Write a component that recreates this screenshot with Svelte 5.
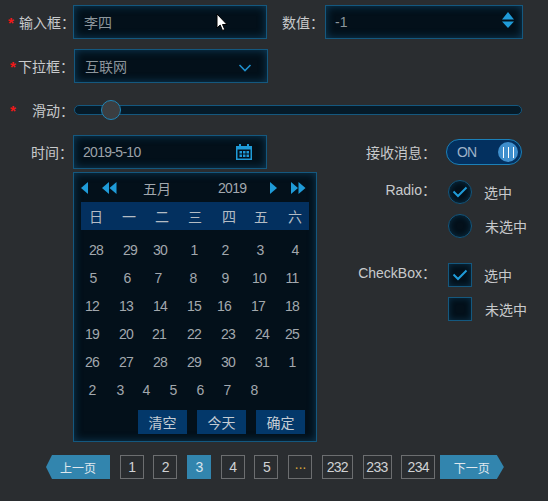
<script>
  // text centres in px from the left of the list, they are not evenly spaced
  const weekDays = [["日", 15], ["一", 48], ["二", 81], ["三", 114], ["四", 148], ["五", 180], ["六", 214]];

  const dayRows = [
    [["28", 15], ["29", 49], ["30", 79], ["1", 113], ["2", 144], ["3", 179], ["4", 214]],
    [["5", 12], ["6", 46], ["7", 77], ["8", 112], ["9", 144], ["10", 178], ["11", 211]],
    [["12", 11], ["13", 45], ["14", 79], ["15", 113], ["16", 143], ["17", 177], ["18", 211]],
    [["19", 11], ["20", 45], ["21", 78], ["22", 113], ["23", 147], ["24", 181], ["25", 211]],
    [["26", 11], ["27", 45], ["28", 79], ["29", 113], ["30", 147], ["31", 181], ["1", 211]],
    [["2", 11], ["3", 39], ["4", 65], ["5", 92], ["6", 119], ["7", 146], ["8", 173]],
  ];

  const pages = [
    { label: "1", width: 24 },
    { label: "2", width: 24 },
    { label: "3", width: 24, active: true },
    { label: "4", width: 24 },
    { label: "5", width: 24 },
    { label: "···", width: 24, dots: true },
    { label: "232", width: 31 },
    { label: "233", width: 29 },
    { label: "234", width: 34 },
  ];
</script>

<div class="page">
  <div class="row first">
    <span class="label"><i class="star">*</i>输入框：</span>
    <div class="field">李四</div>
    <span class="label num-label">数值：</span>
    <div class="field num">
      -1
      <svg class="spin" width="14" height="16" viewBox="0 0 14 16">
        <path d="M7 0 13 7.5H1Z M1 9.5H13L7 16Z" fill="#1f9bd8" />
      </svg>
    </div>
  </div>

  <div class="row second">
    <span class="label"><i class="star">*</i>下拉框：</span>
    <div class="field select">
      互联网
      <svg class="chevron" width="14" height="8" viewBox="0 0 14 8">
        <path d="M1.5 1 7 6.5 12.5 1" fill="none" stroke="#1f8fcc" stroke-width="1.6" />
      </svg>
    </div>
  </div>

  <div class="row slide">
    <span class="label"><i class="star">*</i>滑动：</span>
    <div class="track"><span class="thumb"></span></div>
  </div>

  <div class="columns">
    <div class="left">
      <div class="row">
        <span class="label">时间：</span>
        <div class="field date">
          <span class="digits">2019-5-10</span>
          <svg width="16" height="16" viewBox="0 0 16 16">
            <path d="M0 2H3V0H5V2H11V0H13V2H16V16H0Z M1.5 5.5V14.5H14.5V5.5Z" fill="#1f9bd8" fill-rule="evenodd" />
            <path d="M3.5 7H6V9.5H3.5Z M7 7H9.5V9.5H7Z M10.5 7H13V9.5H10.5Z M3.5 10.5H6V13H3.5Z M7 10.5H9.5V13H7Z M10.5 10.5H13V13H10.5Z" fill="#1f9bd8" />
          </svg>
        </div>
      </div>

      <div class="calendar">
        <div class="cal-head">
          <svg class="nav" width="8" height="12" viewBox="0 0 8 12"><path d="M7 0V12L0 6Z" /></svg>
          <svg class="nav dbl-l" width="15" height="12" viewBox="0 0 15 12"><path d="M7 0V12L0 6Z M14.5 0V12L7.5 6Z" /></svg>
          <span class="month">五月</span>
          <span class="year digits">2019</span>
          <svg class="nav next" width="8" height="12" viewBox="0 0 8 12"><path d="M0 0V12L7 6Z" /></svg>
          <svg class="nav dbl-r" width="15" height="12" viewBox="0 0 15 12"><path d="M0 0V12L7 6Z M7.5 0V12L14.5 6Z" /></svg>
        </div>
        <div class="week day-row">
          {#each weekDays as [d, x], i}
            <span class="day" style="margin-left: {i === 0 ? x : x - weekDays[i - 1][1]}px">{d}</span>
          {/each}
        </div>
        <div class="days digits">
          {#each dayRows as row}
            <div class="day-row">
              {#each row as [d, x], i}
                <span class="day" style="margin-left: {i === 0 ? x : x - row[i - 1][1]}px">{d}</span>
              {/each}
            </div>
          {/each}
        </div>
        <div class="cal-foot">
          <button>清空</button>
          <button>今天</button>
          <button>确定</button>
        </div>
      </div>
    </div>

    <div class="right">
      <div class="opt-row toggle-row">
        <span class="opt-label">接收消息：</span>
        <div class="toggle">
          <span class="on">ON</span>
          <span class="knob"><b></b><b></b><b></b></span>
        </div>
      </div>

      <div class="group radio-group">
        <span class="opt-label">Radio：</span>
        <div class="opts">
          <div class="opt">
            <span class="box round">
              <svg width="16" height="12" viewBox="0 0 16 12"><path d="M1.5 5.5 6 10 14.5 1.5" fill="none" stroke="#1f9bd8" stroke-width="2" /></svg>
            </span>
            选中
          </div>
          <div class="opt off">
            <span class="box round"></span>
            未选中
          </div>
        </div>
      </div>

      <div class="group check-group">
        <span class="opt-label">CheckBox：</span>
        <div class="opts">
          <div class="opt">
            <span class="box">
              <svg width="16" height="12" viewBox="0 0 16 12"><path d="M1.5 5.5 6 10 14.5 1.5" fill="none" stroke="#1f9bd8" stroke-width="2" /></svg>
            </span>
            选中
          </div>
          <div class="opt off">
            <span class="box"></span>
            未选中
          </div>
        </div>
      </div>
    </div>
  </div>

  <div class="pager">
    <button class="turn prev">上一页</button>
    {#each pages as p}
      <button class="pg digits" class:active={p.active} class:dots={p.dots} style="width: {p.width}px">{p.label}</button>
    {/each}
    <button class="turn next-page">下一页</button>
  </div>

  <svg class="cursor" width="12" height="19" viewBox="0 0 12 19">
    <path d="M1 1V15L4.2 12 6.5 17.5 8.8 16.5 6.5 11.5H11Z" fill="#fff" stroke="#000" stroke-width="1" />
  </svg>
</div>

<style>
  :global(body) {
    background: #2a2d30;
  }
  .page {
    position: relative;
    width: 548px;
    height: 501px;
    padding-top: 5px;
    box-sizing: border-box;
    overflow: hidden;
    background: #2a2d30;
    color: #c8cacc;
    font: 14px "Liberation Sans", "Noto Sans CJK SC", sans-serif;
  }
  .digits {
    letter-spacing: -0.7px;
  }
  .row {
    display: flex;
    align-items: center;
    height: 34px;
  }
  .second,
  .slide {
    margin-top: 10px;
  }
  .label {
    width: 73px;
    flex: none;
    box-sizing: border-box;
    position: relative;
    text-align: right;
  }
  .first .label:first-child {
    width: 75px;
    margin-right: -2px;
  }
  .second .label,
  .slide .label {
    width: 74px;
    margin-right: -1px;
  }
  .star {
    position: absolute;
    left: 8px;
    top: 2px;
    color: #f01818;
    font-style: normal;
    font-size: 15px;
    font-weight: bold;
  }
  .second .star,
  .slide .star {
    left: 10px;
  }
  .field {
    width: 194px;
    height: 34px;
    box-sizing: border-box;
    display: flex;
    align-items: center;
    justify-content: space-between;
    padding: 0 14px 0 10px;
    background: #03101a;
    border: 1px solid #14587f;
    box-shadow: inset 0 0 8px rgba(24, 100, 145, 0.55);
    color: #8c969c;
  }
  .first .num-label {
    width: 57px;
    margin-right: 1px;
  }
  .num {
    width: 198px;
    padding: 0 7px 0 9px;
  }
  .spin {
    margin-top: -4px;
  }
  .select {
    margin-left: 1px;
    padding-right: 15px;
  }
  .chevron {
    margin-top: 3px;
  }
  .date {
    padding: 0 14px 0 9px;
    color: #9ca2a8;
  }
  .track {
    position: relative;
    width: 448px;
    height: 10px;
    margin-left: 1px;
    box-sizing: border-box;
    background: #051a28;
    border: 1px solid #14587f;
    border-radius: 5px;
  }
  .thumb {
    position: absolute;
    left: 26px;
    top: -6px;
    width: 20px;
    height: 20px;
    box-sizing: border-box;
    border-radius: 50%;
    background: #3b3e41;
    border: 1.5px solid #1f86b8;
  }

  .columns {
    display: flex;
    margin-top: 8px;
  }
  .left {
    width: 317px;
    flex: none;
  }
  .calendar {
    width: 244px;
    height: 270px;
    margin: 3px 0 0 73px;
    box-sizing: border-box;
    padding: 0 7px;
    background: #03101a;
    border: 1px solid #14587f;
    box-shadow: inset 0 0 8px rgba(24, 100, 145, 0.5);
    color: #a2a8ae;
  }
  .cal-head {
    display: flex;
    align-items: center;
    height: 29px;
  }
  .nav {
    flex: none;
    fill: #1f9bd8;
  }
  .dbl-l {
    margin-left: 13px;
  }
  .month {
    width: 28px;
    margin-left: 26px;
  }
  .year {
    margin-left: 47px;
  }
  .next {
    margin-left: 24px;
  }
  .dbl-r {
    margin-left: 13px;
  }
  .days {
    margin-top: 6px;
  }
  .day-row {
    display: flex;
    height: 28px;
    align-items: center;
  }
  .day {
    width: 0;
    display: flex;
    justify-content: center;
    white-space: nowrap;
  }
  .week {
    background: #03305f;
    color: #b4bcc4;
  }
  .cal-foot {
    display: flex;
    justify-content: flex-end;
    gap: 10px;
    margin-top: 6px;
    padding-right: 4px;
  }
  button {
    padding: 0;
    border: 0;
    font: inherit;
    color: inherit;
  }
  .cal-foot button {
    width: 49px;
    height: 24px;
    background: #03386a;
    color: #c4ccd4;
  }

  .right {
    flex: 1;
  }
  .opt-row,
  .group {
    display: flex;
  }
  .opt-label {
    width: 119px;
    flex: none;
    text-align: right;
    color: #c8cacc;
  }
  .toggle-row {
    align-items: center;
    height: 34px;
  }
  .toggle {
    display: flex;
    align-items: center;
    justify-content: space-between;
    width: 76px;
    height: 26px;
    margin-left: 10px;
    padding: 0 3px 0 10px;
    box-sizing: border-box;
    border: 1.5px solid #1b80b8;
    border-radius: 13px;
    background: #03305f;
  }
  .on {
    color: #9fb2c6;
    letter-spacing: -0.8px;
  }
  .knob {
    display: flex;
    justify-content: center;
    gap: 4px;
    align-items: center;
    width: 20px;
    height: 20px;
    border-radius: 50%;
    background: #3f8fcd;
  }
  .knob b {
    width: 1px;
    height: 11px;
    background: #fff;
  }
  .group {
    align-items: flex-start;
  }
  .group .opt-label {
    margin-top: -1px;
  }
  .radio-group {
    margin-top: 11px;
  }
  .check-group {
    margin-top: 25px;
  }
  .opts {
    display: flex;
    flex-direction: column;
    gap: 10px;
    margin-left: 12px;
  }
  .opt {
    display: flex;
    align-items: center;
    gap: 12px;
    height: 24px;
    white-space: nowrap;
  }
  .off {
    gap: 13px;
  }
  .box {
    display: flex;
    align-items: center;
    justify-content: center;
    width: 24px;
    height: 24px;
    box-sizing: border-box;
    background: #03101a;
    border: 1px solid #14587f;
    box-shadow: inset 0 0 6px rgba(24, 100, 145, 0.4);
  }
  .round {
    border-radius: 50%;
    border-width: 1.5px;
  }

  .pager {
    display: flex;
    align-items: center;
    margin-top: 13px;
    padding-left: 46px;
    gap: 9.7px;
  }
  .pg {
    height: 24px;
    box-sizing: border-box;
    background: transparent;
    border: 1px solid #6c6e70;
    color: #d0d2d4;
  }
  .active {
    background: #3285ae;
    border-color: #3285ae;
    color: #d8e4ec;
  }
  .dots {
    color: #d8a53a;
  }
  .turn {
    width: 64px;
    height: 24px;
    background: #3285ae;
    color: #e0e8ee;
    font-size: 12px;
  }
  .prev {
    clip-path: polygon(6px 0, 100% 0, 100% 100%, 6px 100%, 0 50%);
  }
  .next-page {
    margin-left: -5px;
    clip-path: polygon(0 0, calc(100% - 7px) 0, 100% 50%, calc(100% - 7px) 100%, 0 100%);
  }
  .cursor {
    position: absolute;
    left: 216px;
    top: 13px;
  }
</style>
